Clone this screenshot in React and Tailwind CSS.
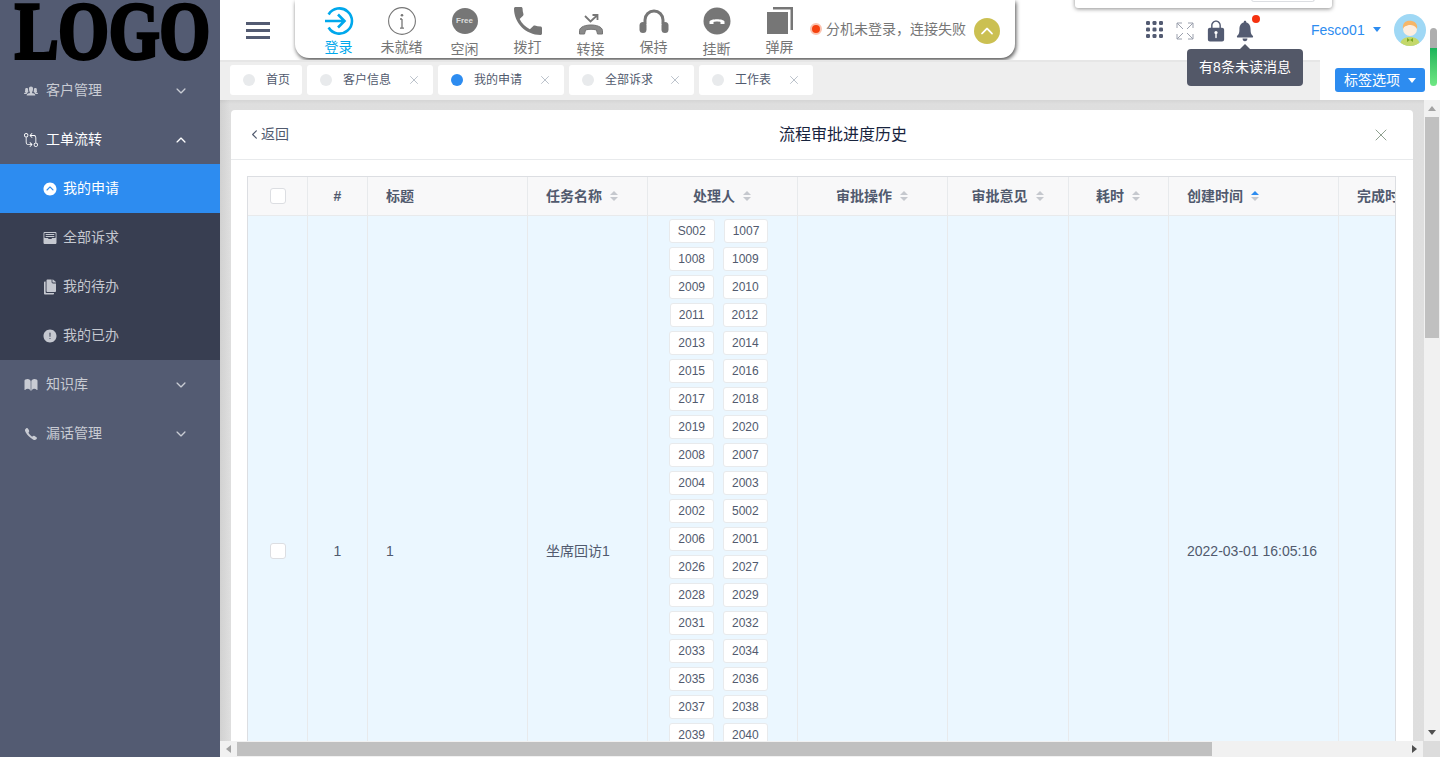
import React from "react";
import { IoIosPeople, IoIosGitCompare, IoIosArrowDropupCircle, IoIosFiling, IoIosCopy, IoIosAlert, IoIosBook, IoIosCall, IoIosLock, IoIosNotifications, IoIosArrowDown, IoIosArrowUp, IoIosArrowBack } from "react-icons/io";
import { X } from "lucide-react";

const FONT = "[font-family:'Liberation_Sans','Noto_Sans_CJK_SC',sans-serif]";

function Caret({ className = "" }) {
  return <svg width="8" height="5" viewBox="0 0 8 5" className={className}><path d="M0 0H8L4 5Z" fill="currentColor" /></svg>;
}

function Sort({ active }) {
  return (
    <svg width="10" height="12" viewBox="0 0 10 12" className="ml-[7px] shrink-0">
      <path d="M5 1L9 5H1Z" fill={active ? "#2d8cf0" : "#c5c8ce"} />
      <path d="M5 11L9 7H1Z" fill="#c5c8ce" />
    </svg>
  );
}

function MenuItem({ icon: Icon, label, open, light }) {
  const Chevron = open ? IoIosArrowUp : IoIosArrowDown;
  return (
    <div className={`flex h-[49px] items-center pl-[23px] pr-[32px] text-[14px] ${light ? "text-white" : "text-[#c9ccd4]"}`}>
      <Icon className="w-[16px] h-[16px] shrink-0" />
      <span className="ml-[7px] flex-1">{label}</span>
      <Chevron className="w-[14px] h-[14px]" />
    </div>
  );
}

function SubItem({ icon: Icon, label, active }) {
  return (
    <div className={`flex h-[49px] items-center pl-[42px] text-[14px] ${active ? "bg-[#2d8cf0] text-white" : "text-[#c5c8d0]"}`}>
      <Icon className="w-[16px] h-[16px] shrink-0" />
      <span className="ml-[5px]">{label}</span>
    </div>
  );
}

const G = "#767676";
const tools = [
  { label: "登录", color: "text-[#00a8ec]",
    icon: <svg width="30" height="30" viewBox="0 0 30 30" fill="none" stroke="#00a8ec" strokeWidth="2.6"><path d="M4.6 8.5A12.6 12.6 0 1 1 4.6 21.5" /><path d="M1 15H20M14 8.5L20.5 15L14 21.5" /></svg> },
  { label: "未就绪",
    icon: <svg width="30" height="30" viewBox="0 0 30 30" fill="none"><circle cx="15" cy="15" r="13.4" stroke={G} strokeWidth="1.1" /><circle cx="15" cy="9.3" r="1.3" fill={G} /><path d="M15 13V22M13 13H15M13 22.2H17" stroke={G} strokeWidth="1.3" /></svg> },
  { label: "空闲", low: true,
    icon: <div className="w-[26px] h-[26px] my-[2px] rounded-full bg-[#767676] flex items-center justify-center text-[8px] text-[#ddd] font-bold">Free</div> },
  { label: "拨打",
    icon: <svg width="28" height="28" viewBox="3 3 18 18"><path fill={G} d="M6.62 10.79c1.44 2.83 3.76 5.14 6.59 6.59l2.2-2.2c.27-.27.67-.36 1.02-.24 1.12.37 2.33.57 3.57.57.55 0 1 .45 1 1V20c0 .55-.45 1-1 1-9.39 0-17-7.61-17-17 0-.55.45-1 1-1h3.5c.55 0 1 .45 1 1 0 1.25.2 2.45.57 3.57.11.35.03.74-.25 1.02l-2.2 2.2z" /></svg> },
  { label: "转接", low: true,
    icon: <svg width="26" height="26" viewBox="0 0 26 26" fill="none" className="mt-[4px]"><path d="M1.5 24V20.5C2 16.5 8 15 13 15S24 16.5 24.5 20.5V24H19.5L18.5 20C15.5 19 10.5 19 7.500 20L6.500 24Z" fill="#8a8a8a" stroke={G} strokeWidth="1" /><path d="M7 6L12.500 11.500L19 5.500M14.500 5H19.500V10" stroke={G} strokeWidth="1.800" /></svg> },
  { label: "保持",
    icon: <svg width="30" height="30" viewBox="0 0 30 30" fill="none"><path d="M6 18V14A9 9 0 0 1 24 14V18" stroke={G} strokeWidth="3" /><rect x="0.5" y="16" width="7" height="11" rx="3.5" fill={G} /><rect x="22.5" y="16" width="7" height="11" rx="3.5" fill={G} /></svg> },
  { label: "挂断", low: true,
    icon: <svg width="28" height="28" viewBox="0 0 28 28" className="my-px"><circle cx="14" cy="14" r="13.5" fill={G} /><path d="M6.5 17V14.5C7.5 11.5 20.5 11.5 21.5 14.5V17H17.5V15C16 14.3 12 14.3 10.5 15V17Z" fill="#fff" /></svg> },
  { label: "弹屏",
    icon: <svg width="30" height="30" viewBox="0 0 30 30"><path d="M8 1H28V24H25.5V3.500H8Z" fill={G} /><rect x="2" y="6" width="21" height="22" fill={G} /></svg> },
];

const tabs = [
  { label: "首页", w: "w-[72px]" },
  { label: "客户信息", close: true, w: "w-[126px]" },
  { label: "我的申请", close: true, active: true, w: "w-[126px]" },
  { label: "全部诉求", close: true, w: "w-[125px]" },
  { label: "工作表", close: true, w: "w-[114px]" },
];

const tagRows = [
  ["S002", "1007"], ["1008", "1009"], ["2009", "2010"], ["2011", "2012"], ["2013", "2014"],
  ["2015", "2016"], ["2017", "2018"], ["2019", "2020"], ["2008", "2007"], ["2004", "2003"],
  ["2002", "5002"], ["2006", "2001"], ["2026", "2027"], ["2028", "2029"], ["2031", "2032"],
  ["2033", "2034"], ["2035", "2036"], ["2037", "2038"], ["2039", "2040"],
];

const columns = [
  { w: "w-[60px]", center: true, check: true },
  { w: "w-[60px]", center: true, title: "#", body: "1" },
  { w: "w-[160px]", title: "标题", body: "1" },
  { w: "w-[120px]", title: "任务名称", sort: true, body: "坐席回访1" },
  { w: "w-[150px]", center: true, title: "处理人", sort: true, tags: true },
  { w: "w-[150px]", center: true, title: "审批操作", sort: true },
  { w: "w-[121px]", center: true, title: "审批意见", sort: true },
  { w: "w-[100px]", center: true, title: "耗时", sort: true },
  { w: "w-[170px]", title: "创建时间", sort: true, active: true, body: "2022-03-01 16:05:16" },
  { w: "w-[170px]", title: "完成时间", sort: true },
];

function Check() {
  return <div className="w-[16px] h-[16px] rounded-[3px] border border-[#dcdee2] bg-white" />;
}

export default function App() {
  return (
    <div className={`relative flex h-[757px] w-[1440px] overflow-hidden bg-white text-[#515a6e] ${FONT}`}>
      <aside className="w-[220px] shrink-0 bg-[#535b72] flex flex-col">
        <div className="h-[66px] overflow-hidden pl-[15px]">
          <div className="origin-top-left scale-y-[1.25] text-black font-bold text-[65px] leading-none -mt-[10px] [font-family:'Liberation_Serif',serif] [-webkit-text-stroke:3px_black]">LOGO</div>
        </div>
        <MenuItem icon={IoIosPeople} label="客户管理" />
        <MenuItem icon={IoIosGitCompare} label="工单流转" open light />
        <SubItem icon={IoIosArrowDropupCircle} label="我的申请" active />
        <div className="bg-[#383e51]">
          <SubItem icon={IoIosFiling} label="全部诉求" />
          <SubItem icon={IoIosCopy} label="我的待办" />
          <SubItem icon={IoIosAlert} label="我的已办" />
        </div>
        <MenuItem icon={IoIosBook} label="知识库" />
        <MenuItem icon={IoIosCall} label="漏话管理" />
      </aside>

      <main className="flex-1 min-w-0 flex flex-col">
        <header className="h-[60px] shrink-0 flex items-start bg-white">
          <div className="ml-[26px] mt-[22px] w-[24px] flex flex-col gap-[4.5px]">
            <span className="h-[2.5px] bg-[#535b72]" /><span className="h-[2.5px] bg-[#535b72]" /><span className="h-[2.5px] bg-[#535b72]" />
          </div>
          <div className="ml-[25px] w-[720px] h-[58px] flex items-start pl-[12px] bg-white rounded-b-[14px] shadow-[1px_2px_4px_rgba(0,0,0,0.7)]">
            {tools.map((t) => (
              <div key={t.label} className="w-[63px] shrink-0 flex flex-col items-center mt-[6px]">
                <div className="h-[30px] flex items-center justify-center">{t.icon}</div>
                <span className={`text-[14px] leading-[20px] ${t.low ? "mt-[3px]" : "mt-px"} ${t.color || "text-[#767676]"}`}>{t.label}</span>
              </div>
            ))}
            <span className="mt-[23px] ml-[-1px] w-[12px] h-[12px] rounded-full bg-[#f5420f] border-2 border-[#fbc3b0] shrink-0" />
            <span className="mt-[19px] ml-[4px] text-[14px] leading-[20px] text-[#767676] whitespace-nowrap">分机未登录，连接失败</span>
            <span className="mt-[18px] ml-[8px] w-[26px] h-[26px] rounded-full bg-[#cbc052] shrink-0 flex items-center justify-center text-white"><IoIosArrowUp className="w-[18px] h-[18px]" /></span>
          </div>
          <div className="ml-[131px] mt-[21px] flex items-start">
            <svg width="17" height="17" viewBox="0 0 17 17" fill="#535b72">
              {[2, 8.5, 15].flatMap((y) => [2, 8.5, 15].map((x) => <rect key={`${x}-${y}`} x={x - 2} y={y - 2} width="4" height="4" rx="1.2" />))}
            </svg>
            <svg width="20" height="20" viewBox="0 0 20 20" fill="none" stroke="#9ba0ad" strokeWidth="1" className="ml-[12px]">
              <path d="M2 2L8 8M18 2L12 8M2 18L8 12M18 18L12 12M2 7V2H7M13 2H18V7M2 13V18H7M13 18H18V13" />
            </svg>
            <IoIosLock className="ml-[8px] -mt-[3px] w-[26px] h-[26px] text-[#535b72]" />
            <IoIosNotifications className="ml-[3px] -mt-[3px] w-[26px] h-[26px] text-[#535b72]" />
            <span className="ml-[53px] -mt-px text-[14px] leading-[20px] text-[#2d8cf0]">Fesco01</span>
            <Caret className="ml-[8px] mt-[6px] text-[#2d8cf0]" />
            <div className="ml-[13px] -mt-[7px] w-[32px] h-[32px] rounded-full bg-[#9fd8f5] overflow-hidden">
              <svg width="32" height="32" viewBox="0 0 32 32">
                <path d="M6 32C6 25 11 23 16 23S26 25 26 32Z" fill="#c4d86a" />
                <circle cx="16" cy="15" r="7" fill="#fdeee0" />
                <path d="M9 15C8 8 13 6 18 7C22 8 24 11 23 15C21 11 17 11 15 11C12 12 10 12 9 15Z" fill="#f6b668" />
                <path d="M13 24L16 26L19 24V28L16 26L13 28Z" fill="#7da820" />
              </svg>
            </div>
          </div>
        </header>

        <div className="h-[40px] shrink-0 flex bg-[#eeeeee] border-t-2 border-[#e6e6e6]">
          <div className="flex-1 flex items-start gap-[5px] pl-[10px] pt-[3px]">
            {tabs.map((t) => (
              <div key={t.label} className={`${t.w} h-[30px] bg-white rounded-[3px] flex items-center pl-[13px] text-[12px] text-[#515a6e]`}>
                <span className={`w-[12px] h-[12px] rounded-full shrink-0 ${t.active ? "bg-[#2d8cf0]" : "bg-[#e8eaec]"}`} />
                <span className="ml-[11px] flex-1 whitespace-nowrap">{t.label}</span>
                {t.close && <X className="w-[14px] h-[14px] mr-[12px] text-[#9ea7b4]" strokeWidth={1.2} />}
              </div>
            ))}
          </div>
          <div className="w-[120px] bg-white pl-[15px] pt-[6px] -mt-[2px]">
            <div className="w-[90px] h-[24px] mt-[2px] rounded-[3px] bg-[#2d8cf0] text-white text-[14px] flex items-center pl-[9px]">
              标签选项<Caret className="ml-[8px] text-white" />
            </div>
          </div>
        </div>

        <div className="flex-1 min-h-0 flex flex-col">
          <div className="flex-1 min-h-0 flex">
            <div className="flex-1 min-w-0 overflow-hidden pl-[11px] pt-[10px] bg-[linear-gradient(to_bottom,#e4e4e4,#eeeeee_4px),linear-gradient(to_right,#e0e0e0,#eeeeee_10px)] bg-blend-multiply">
              <div className="w-[1182px] h-[700px] bg-white rounded-[4px]">
                <div className="relative h-[50px] border-b border-[#e8eaec] flex items-center justify-center pl-[42px]">
                  <div className="absolute left-[17px] top-0 h-[49px] flex items-center text-[14px] text-[#515a6e]">
                    <IoIosArrowBack className="w-[13px] h-[13px]" /><span>返回</span>
                  </div>
                  <span className="text-[16px] text-[#17233d]">流程审批进度历史</span>
                  <X className="absolute right-[22px] top-[15px] w-[20px] h-[20px] text-[#8fa08f]" strokeWidth={1.2} />
                </div>
                <div className="ml-[16px] mt-[16px] w-[1149px] h-[640px] overflow-hidden border border-[#dcdee2]">
                  <div className="flex w-[1261px]">
                    {columns.map((c, i) => (
                      <div key={i} className={`${c.w} shrink-0 border-r border-[#e8eaec] flex flex-col`}>
                        <div className={`h-[39px] bg-[#f8f8f9] border-b border-[#e8eaec] flex items-center text-[14px] font-bold text-[#515a6e] whitespace-nowrap ${c.center ? "justify-center" : "pl-[18px]"}`}>
                          {c.check ? <Check /> : c.title}
                          {c.sort && <Sort active={c.active} />}
                        </div>
                        <div className={`h-[670px] bg-[#ebf7ff] flex text-[14px] ${c.tags ? "flex-col pt-[3px] gap-[4px] overflow-hidden" : `items-center ${c.center ? "justify-center" : "pl-[18px]"}`}`}>
                          {c.check && <Check />}
                          {c.body && <span className="whitespace-nowrap">{c.body}</span>}
                          {c.tags && tagRows.map((r) => (
                            <div key={r[0]} className="flex justify-center gap-[9px] pr-[8px]">
                              {r.map((v) => (
                                <span key={v} className="h-[24px] px-[8px] leading-[22px] text-[12px] bg-white border border-[#e8eaec] rounded-[3px]">{v}</span>
                              ))}
                            </div>
                          ))}
                        </div>
                      </div>
                    ))}
                  </div>
                </div>
              </div>
            </div>
            <div className="w-[16px] shrink-0 bg-[#f1f1f1] flex flex-col items-center">
              <svg width="8" height="5" viewBox="0 0 8 5" className="mt-[6px] text-[#a3a3a3]"><path d="M4 0L8 5H0Z" fill="currentColor" /></svg>
              <div className="mt-[6px] w-[14px] h-[221px] bg-[#c0c0c0]" />
              <div className="flex-1" />
              <Caret className="mb-[6px] text-[#505050]" />
            </div>
          </div>
          <div className="h-[16px] shrink-0 bg-[#f1f1f1] flex items-center">
            <svg width="5" height="8" viewBox="0 0 5 8" className="ml-[6px] text-[#a3a3a3]"><path d="M0 4L5 0V8Z" fill="currentColor" /></svg>
            <div className="ml-[6px] w-[975px] h-[14px] bg-[#c0c0c0]" />
            <div className="flex-1" />
            <svg width="5" height="8" viewBox="0 0 5 8" className="mr-[6px] text-[#505050]"><path d="M5 4L0 0V8Z" fill="currentColor" /></svg>
            <div className="w-[17px] h-[16px] bg-[#dcdcdc]" />
          </div>
        </div>
      </main>

      {/* overlays */}
      <div className="absolute left-[1075px] -top-[10px] w-[257px] h-[18px] bg-white rounded-[3px] shadow-[0_1px_4px_rgba(0,0,0,0.45)]">
        <div className="absolute left-[176px] bottom-[6px] w-[64px] h-[4px] border-b border-x border-[#dcdee2] rounded-b-[3px]" />
      </div>
      <span className="absolute left-[1252px] top-[15px] w-[8px] h-[8px] rounded-full bg-[#f5310f]" />
      <div className="absolute left-[1187px] top-[49px] w-[116px] h-[37px] rounded-[4px] bg-[#535868] text-white text-[14px] flex items-center justify-center">
        <span className="absolute -top-[5px] left-[53px] w-0 h-0 border-x-[5px] border-x-transparent border-b-[5px] border-b-[#535868]" />
        有8条未读消息
      </div>
      <div className="absolute left-[1430px] top-[28px] w-[7px] h-[58px] rounded-full overflow-hidden flex flex-col">
        <div className="h-[20px] bg-[#aeaeae]" />
        <div className="flex-1 bg-gradient-to-b from-[#17b45a] to-[#6fe884]" />
      </div>
    </div>
  );
}
